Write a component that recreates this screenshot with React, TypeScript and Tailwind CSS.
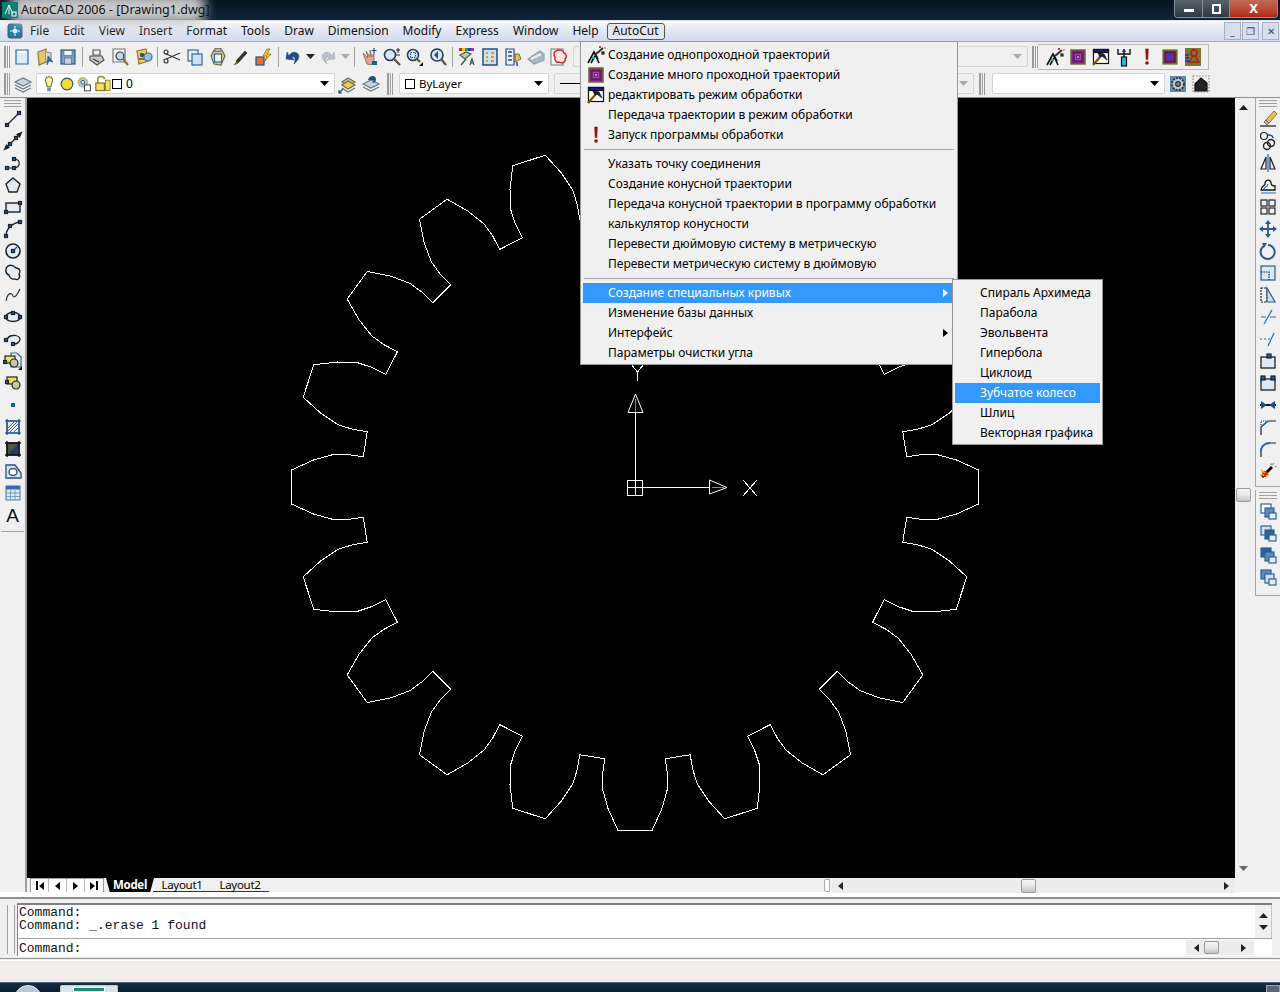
import React from "react";

const UI = "font-['Noto_Sans','Open_Sans',sans-serif]";

/* ---------- gear geometry ---------- */
const CX = 635, CY = 488;
const half: [number, number][] = [[343.7, 2.85], [322.6, 4.8], [303.4, 6.15], [288.5, 6.45], [273.4, 6.35]];
function gearPoints() {
  const pts: string[] = [];
  for (let i = 0; i < 20; i++) {
    const c = 180 - i * 18;
    const add = (r: number, a: number) => {
      const t = (a * Math.PI) / 180;
      pts.push(`${(CX + r * Math.cos(t)).toFixed(1)},${(CY + r * Math.sin(t)).toFixed(1)}`);
    };
    for (let k = half.length - 1; k >= 0; k--) add(half[k][0], c + half[k][1]);
    for (let k = 0; k < half.length; k++) add(half[k][0], c - half[k][1]);
  }
  return pts.join(" ");
}

/* ---------- icon primitives ---------- */
const Dot = ({ x, y, s = 3 }: { x: number; y: number; s?: number }) => (
  <rect x={x - s / 2} y={y - s / 2} width={s} height={s} fill="#0b5fb8" />
);
const Ic = ({ children, s = 20 }: { children: React.ReactNode; s?: number }) => (
  <svg width={s} height={s} viewBox="0 0 20 20" fill="none" stroke="#222" strokeWidth={1.2}>{children}</svg>
);

const Wand = () => (
  <Ic>
    <path d="M2 18 L8 7 L12 14 M5 18 L9 11 M13 18 L8 7" stroke="#111" strokeWidth={1.6} />
    <path d="M10 9 L17 3" stroke="#333" strokeWidth={2} />
    <path d="M6 13 L9 13" stroke="#18a5c9" strokeWidth={2} />
    <Dot x={17} y={8} s={2} /><rect x="13" y="1" width="2" height="2" fill="#c33" stroke="none" /><rect x="18" y="2" width="2" height="2" fill="#d9a" stroke="none" />
  </Ic>
);
const Purple = () => (
  <Ic>
    <rect x="3" y="3" width="14" height="14" fill="#80207f" stroke="#6b6b30" strokeWidth={1.5} />
    <rect x="6" y="6" width="8" height="8" fill="#a04aa0" stroke="#5a1060" />
    <rect x="8.5" y="8.5" width="3" height="3" fill="#e070c0" stroke="#5a1060" strokeWidth={0.7} />
  </Ic>
);
const Hammer = () => (
  <Ic>
    <rect x="2.5" y="2.5" width="15" height="14" fill="#fff" stroke="#111" />
    <rect x="2.5" y="2.5" width="15" height="3" fill="#141c8c" stroke="#111" />
    <path d="M2 18 L10 9" stroke="#7a5200" strokeWidth={2.2} />
    <path d="M7 6 L13 7 L16 13 L11 9 L9 10 Z" fill="#222" stroke="#111" strokeWidth={0.8} />
  </Ic>
);
const Excl = () => (
  <Ic>
    <path d="M8.7 2 H11.3 L10.8 12.5 H9.2 Z" fill="#a00d12" stroke="#8c0a0e" strokeWidth={0.6} />
    <circle cx="10" cy="16" r="1.8" fill="#a00d12" stroke="none" />
  </Ic>
);
const Fork = () => (
  <Ic>
    <path d="M4 2 V7 H16 V2 M10 2 V10" stroke="#111" strokeWidth={1.4} />
    <rect x="7.5" y="10" width="5" height="9" fill="#22c1d6" stroke="#111" />
    <path d="M8.5 5 L10 3 L11.5 5" stroke="#1b2fa0" strokeWidth={1.5} />
  </Ic>
);
const PurpleBlue = () => (
  <Ic>
    <rect x="3" y="3" width="14" height="14" fill="#7a6a30" stroke="#6b6b30" />
    <rect x="5" y="5" width="10" height="10" fill="#80207f" stroke="#4a1050" />
    <path d="M8 7 V13 M8 10 H13" stroke="#2a40d0" strokeWidth={1.5} />
  </Ic>
);
const Olive = () => (
  <Ic>
    <rect x="2" y="1" width="16" height="18" fill="#7c7430" stroke="none" />
    <circle cx="11" cy="6" r="3" stroke="#c01414" strokeWidth={1.4} />
    <path d="M10 9 L6 15 H16 L12 9" stroke="#c01414" strokeWidth={1.3} />
    <path d="M2 8 H6 M2 11 H6 M2 14 H6" stroke="#1b2fc0" strokeWidth={1.4} />
  </Ic>
);

const Doc = () => (<Ic><path d="M4 3 H16 V17 H4 Z" fill="#dcebf7" stroke="#2a6a9a" /><path d="M6 5 H14" stroke="#fff" strokeWidth={2} /></Ic>);
const OpenF = () => (<Ic><path d="M3 5 L11 2 V15 L4 18 Z" fill="#e8c66a" stroke="#8a7a4a" /><path d="M11 5 L16 6 V12 L11 15" fill="#d8d8c8" stroke="#888" /><path d="M13 9 L18 15 L14 14 L12 18 Z" fill="#2a6aa8" stroke="#1a4a80" strokeWidth={0.6} /></Ic>);
const Save = () => (<Ic><rect x="3" y="3" width="14" height="14" fill="#7aa0c8" stroke="#2a5a8a" /><rect x="6" y="3.5" width="8" height="5" fill="#f4f4f4" stroke="#557" strokeWidth={0.6} /><rect x="6.5" y="11" width="7" height="6" fill="#c8d4e4" stroke="#557" strokeWidth={0.6} /></Ic>);
const Printer = () => (<Ic><path d="M6 3 H13 V8 H6 Z" fill="#f0f0f0" stroke="#555" /><path d="M3 9 H15 L17 13 L10 18 L3 13 Z" fill="#c8c8d0" stroke="#555" /><path d="M6 12 L12 15" stroke="#333" /></Ic>);
const Preview = () => (<Ic><path d="M3 2 H15 V15 H3 Z" fill="#f4f4f4" stroke="#777" /><circle cx="10" cy="9" r="4" fill="#bcd8f0" stroke="#335" /><path d="M13 12 L18 18" stroke="#a06a1a" strokeWidth={2.2} /></Ic>);
const Publish = () => (<Ic><path d="M4 4 L13 2 L15 14 L6 17 Z" fill="#f4d060" stroke="#8a7a20" /><circle cx="9" cy="8" r="2.2" fill="#2a4a8a" stroke="none" /><circle cx="15" cy="10" r="4" fill="#9ac0e0" stroke="#4a6a90" /><path d="M6 12 H11" stroke="#555" strokeWidth={1.5} /></Ic>);
const Cut = () => (<Ic><path d="M2 6 L18 13 M2 13 L18 6" stroke="#333" strokeWidth={1.1} /><circle cx="4" cy="5" r="2" fill="#eee" stroke="#333" /><circle cx="4" cy="14" r="2" fill="#eee" stroke="#333" /></Ic>);
const Copy = () => (<Ic><rect x="3" y="3" width="10" height="11" fill="#e8f0f8" stroke="#2a6a9a" /><rect x="7" y="7" width="10" height="11" fill="#cfe0f0" stroke="#2a6a9a" /></Ic>);
const Paste = () => (<Ic><path d="M6 3 L14 3 L17 9 L13 18 L6 17 L3 9 Z" fill="#e4c878" stroke="#6a6a50" /><rect x="6.5" y="7" width="7" height="8" fill="#eef4fa" stroke="#2a6a9a" /><rect x="7" y="1.5" width="6" height="3" fill="#bbb" stroke="#555" strokeWidth={0.7} /></Ic>);
const Brush = () => (<Ic><path d="M5 14 L14 4 L16 6 L7 16 Z" fill="#333" stroke="#111" strokeWidth={0.6} /><path d="M3 18 L6 14 L7 16 Z" fill="#a06a1a" stroke="#5a3a10" strokeWidth={0.6} /></Ic>);
const Bolt = () => (<Ic><rect x="2" y="10" width="8" height="8" fill="#e87030" stroke="#2a4a8a" /><path d="M13 2 L9 9 H13 L10 15 L17 7 H13 L16 2 Z" fill="#f4d020" stroke="#8a6a10" strokeWidth={0.8} /></Ic>);
const Undo = () => (<Ic><path d="M6 9 C8 4 15 4 16 9 C16 12 14 14 11 17 C13 12 12 9 9 10 L11 13 L3 12 L4 5 Z" fill="#1f4f8a" stroke="#153a68" strokeWidth={0.5} /></Ic>);
const Redo = () => (<Ic><path d="M14 9 C12 4 5 4 4 9 C4 12 6 14 9 17 C7 12 8 9 11 10 L9 13 L17 12 L16 5 Z" fill="#b8bec4" stroke="#a0a6ac" strokeWidth={0.5} /></Ic>);
const Pan = () => (<Ic><path d="M4 6 L9 11 L7 4 L11 10 L11 3 L13 10 L15 6 L15 14 L12 18 L8 17 Z" fill="#d8a890" stroke="#8a5a50" strokeWidth={0.8} /><path d="M15 1 V6 M12.5 3.5 H17.5" stroke="#1a4a8a" strokeWidth={1.2} /><rect x="13" y="14" width="5" height="4" fill="#1f5a9a" stroke="none" /></Ic>);
const Zoom1 = () => (<Ic><circle cx="8" cy="8" r="5.5" fill="#d8e8f4" stroke="#2a3a5a" strokeWidth={1.6} /><path d="M12 12 L18 18" stroke="#6a5a3a" strokeWidth={2.4} /><path d="M16 1 V6 M14 3 H18 M14 8 H18" stroke="#222" strokeWidth={1} /></Ic>);
const Zoom2 = () => (<Ic><circle cx="8" cy="8" r="5.5" fill="#d8e8f4" stroke="#2a3a5a" strokeWidth={1.6} /><rect x="5.5" y="5.5" width="5" height="5" stroke="#1f4f8a" strokeDasharray="1.5 1" /><path d="M12 12 L15 15" stroke="#6a5a3a" strokeWidth={2.4} /><path d="M18 15 V19 H14 Z" fill="#111" stroke="none" /></Ic>);
const Zoom3 = () => (<Ic><circle cx="9" cy="8" r="6" fill="#d8e8f4" stroke="#2a3a5a" strokeWidth={1.6} /><path d="M6 8 L10 4 V12 Z" fill="#1f4f8a" stroke="none" /><path d="M13 12 L18 18" stroke="#6a5a3a" strokeWidth={2.4} /></Ic>);
const Props = () => (<Ic><rect x="2" y="1" width="3" height="3" fill="#e02020" stroke="none" /><rect x="5" y="1" width="3" height="3" fill="#e0c020" stroke="none" /><rect x="8" y="1" width="3" height="3" fill="#20a040" stroke="none" /><rect x="11" y="1" width="3" height="3" fill="#2040d0" stroke="none" /><rect x="14" y="1" width="3" height="3" fill="#c020c0" stroke="none" /><path d="M3 8 L9 5 L14 7 L8 12 Z" fill="#bcd0a0" stroke="#555" /><path d="M9 12 L4 18 M13 18 L15 12 L17 18 M14 16 H16" stroke="#444" /></Ic>);
const DC = () => (<Ic><rect x="3" y="2" width="14" height="16" fill="#cfe0f0" stroke="#1f4f8a" strokeWidth={1.5} /><path d="M6 6 H8 M11 6 H14 M6 10 H8 M11 10 H14 M6 14 H8 M11 14 H14" stroke="#d8a020" strokeWidth={2} /></Ic>);
const Pal = () => (<Ic><path d="M3 2 H11 V18 H3 Z" fill="#eef" stroke="#2a4a7a" /><path d="M5 5 H9 M5 9 H9 M5 13 H9" stroke="#2a4a7a" strokeWidth={1.4} /><path d="M12 7 H16 L18 12 L12 15 Z" fill="#e8c040" stroke="#555" strokeWidth={0.8} /><path d="M14 15 V19" stroke="#1f4f8a" strokeWidth={1.5} /></Ic>);
const Sheet = () => (<Ic><path d="M2 12 L14 4 L18 7 L18 13 L8 17 Z" fill="#a8b8c4" stroke="#90a0a8" /><path d="M5 12 L15 7" stroke="#e8f0f4" strokeWidth={2} /></Ic>);
const Markup = () => (<Ic><rect x="2" y="2" width="12" height="16" fill="#fff" stroke="#888" /><path d="M7 4 C10 2 14 3 15 6 C18 7 18 10 16 12 C17 15 13 17 10 15 C7 16 5 13 6 10 C4 8 5 5 7 4 Z" fill="#fbe4e4" stroke="#d02020" strokeWidth={1.4} /></Ic>);

const Layers = () => (<Ic><path d="M2 8 L10 4 L18 8 L10 12 Z" fill="#c8d4dc" stroke="#6a7a88" /><path d="M2 11 L10 15 L18 11 M2 14 L10 18 L18 14" stroke="#6a7a88" /></Ic>);
const Bulb = () => (<Ic><path d="M10 2 C14 2 15 6 13 9 L12 13 H8 L7 9 C5 6 6 2 10 2 Z" fill="#fbf6a0" stroke="#6a6a40" /><rect x="8" y="14" width="4" height="4" fill="#7a8a9a" stroke="none" /></Ic>);
const Sun = () => (<Ic><circle cx="10" cy="10" r="6.5" fill="#f4dc30" stroke="#2a4a8a" /></Ic>);
const Gear2 = () => (<Ic><circle cx="8" cy="8" r="5.5" fill="#a8c8e8" stroke="#c8a030" strokeDasharray="2 1" strokeWidth={1.6} /><circle cx="8" cy="8" r="2" fill="#dff" stroke="#557" /><rect x="10" y="11" width="7" height="7" fill="#fff" stroke="#445" /></Ic>);
const Lock = () => (<Ic><path d="M5 9 V5 C5 1 12 1 12 5" stroke="#a08a20" strokeWidth={1.6} /><rect x="3" y="9" width="9" height="8" fill="#f4e060" stroke="#807020" /><rect x="13" y="6" width="5" height="11" fill="#f4e060" stroke="#807020" strokeWidth={0.8} /></Ic>);
const LayerSw = () => (<Ic><path d="M4 8 L10 4 L17 8 L10 12 Z" fill="#d8c8a0" stroke="#6a6a50" /><path d="M4 11 L10 15 L17 11 L10 7 Z" fill="#f0d040" stroke="#6a6a50" /><path d="M4 14 L10 18 L17 14" stroke="#6a7a88" /><path d="M1 19 L5 15 M1 16 V19 H4" stroke="#1f4f8a" /></Ic>);
const LayerPrev = () => (<Ic><path d="M2 10 L10 6 L18 10 L10 14 Z" fill="#c8d4dc" stroke="#6a7a88" /><path d="M2 13 L10 17 L18 13" stroke="#6a7a88" /><path d="M7 6 C8 1 15 1 15 5 C15 8 13 9 11 9 L13 6 L9 6 Z" fill="#1f4f8a" stroke="none" /></Ic>);
const Cog = () => (<Ic><rect x="2" y="2" width="16" height="16" fill="#5a8ab8" stroke="none" /><circle cx="10" cy="10" r="6" fill="#c8c8c8" stroke="#333" strokeDasharray="2 1.2" strokeWidth={1.8} /><circle cx="10" cy="10" r="2.4" fill="#5a8ab8" stroke="#333" /></Ic>);
const House = () => (<Ic><rect x="2" y="2" width="16" height="16" stroke="#888" strokeDasharray="1.5 1.5" /><path d="M4 10 L10 4 L16 9 V17 H4 Z" fill="#222" stroke="#111" /></Ic>);

/* draw toolbar */
const L1 = () => (<Ic><path d="M4 16 L16 4" /><Dot x={4} y={16} /><Dot x={16} y={4} /></Ic>);
const L2 = () => (<Ic><path d="M3 17 L17 3" strokeWidth={1.3} /><path d="M1.5 18.5 L6 16.5 L3.5 14 Z M18.5 1.5 L14 3.5 L16.5 6 Z" fill="#111" /><Dot x={7} y={13} /><Dot x={13} y={7} /></Ic>);
const L3 = () => (<Ic><path d="M4 15 H11 M11 15 C18 14 18 6 11 6" /><Dot x={4} y={15} /><Dot x={11} y={15} /><Dot x={11} y={6} /></Ic>);
const L4 = () => (<Ic><path d="M10 3 L17 9 L14 17 H6 L3 9 Z" fill="#e0e8f0" stroke="#222" strokeWidth={1.4} /></Ic>);
const L5 = () => (<Ic><rect x="3" y="6" width="14" height="9" fill="#e4ecf4" strokeWidth={1.4} /><Dot x={3} y={15} /><Dot x={17} y={6} /></Ic>);
const L6 = () => (<Ic><path d="M3 17 C3 10 9 4 17 3" strokeWidth={1.4} /><Dot x={3} y={17} /><Dot x={7} y={7} /><Dot x={17} y={3} /></Ic>);
const L7 = () => (<Ic><circle cx="10" cy="10" r="7" fill="#e4ecf4" strokeWidth={1.6} /><path d="M10 10 L14 6" stroke="#0b5fb8" /><Dot x={10} y={10} /></Ic>);
const L8 = () => (<Ic><path d="M5 3 C9 1 12 4 13 5 C17 5 18 9 16 11 C18 14 15 18 12 16 C8 17 6 13 6 12 C2 11 2 5 5 3 Z" fill="#e4ecf4" strokeWidth={1.4} /></Ic>);
const L9 = () => (<Ic><path d="M3 16 C5 6 9 8 10 11 C12 14 15 8 17 4" strokeWidth={1.2} stroke="#333" /></Ic>);
const L10 = () => (<Ic><ellipse cx="10" cy="10" rx="7.5" ry="4.5" fill="#e4ecf4" strokeWidth={1.4} /><Dot x={10} y={6} /><Dot x={3} y={10} /><Dot x={17} y={10} /></Ic>);
const L11 = () => (<Ic><path d="M4 12 C4 5 16 5 17 10 C17 13 14 15 11 15" fill="#e4ecf4" strokeWidth={1.3} /><Dot x={3} y={11} /><Dot x={10} y={15} /></Ic>);
const L12 = () => (<Ic><path d="M8 2 H14 L18 6 V16 H8 Z" fill="#e4ecf4" stroke="#2a6a9a" /><rect x="2" y="5" width="10" height="7" fill="#f0e070" stroke="#222" /><circle cx="11" cy="12" r="4" fill="#c8c8a0" stroke="#222" /><Dot x={2} y={11} /><path d="M19 15 V19 H15 Z" fill="#111" stroke="none" /></Ic>);
const L13 = () => (<Ic><rect x="4" y="4" width="10" height="7" fill="#f0e070" stroke="#222" /><circle cx="13" cy="12" r="4" fill="#c8c8a0" stroke="#222" /><Dot x={4} y={9} /></Ic>);
const L14 = () => (<Ic><rect x="8" y="8" width="4" height="4" fill="#0b5fb8" stroke="none" /></Ic>);
const L15 = () => (<Ic><rect x="4" y="4" width="12" height="12" fill="#e8eef4" stroke="#1f4f8a" /><path d="M2 4 H18 M2 16 H18 M4 2 V18 M16 2 V18" stroke="#1f4f8a" /><path d="M5 14 L14 5 M7 15 L15 7 M5 11 L11 5 M11 15 L15 11" stroke="#333" strokeWidth={0.8} /></Ic>);
const L16 = () => (<Ic><rect x="4" y="4" width="12" height="12" fill="#555540" stroke="#111" /><path d="M4 16 L16 4 V16 Z" fill="#2a3a6a" stroke="none" /><path d="M2 4 H18 M2 16 H18 M4 2 V18 M16 2 V18" stroke="#111" strokeWidth={1.4} /></Ic>);
const L17 = () => (<Ic><path d="M3 4 H12 L18 12 V17 H3 Z" fill="#d8e8f4" stroke="#1f4f8a" strokeWidth={1.3} /><ellipse cx="10" cy="11" rx="4" ry="3.5" fill="#fff" stroke="#555" strokeWidth={1.5} /></Ic>);
const L18 = () => (<Ic><rect x="3" y="3" width="14" height="14" fill="#dce8f4" stroke="#6a8ab0" /><rect x="3" y="3" width="14" height="3.5" fill="#3a6ab0" stroke="none" /><path d="M3 10 H17 M3 13.5 H17 M7.5 7 V17 M12 7 V17" stroke="#6a8ab0" strokeWidth={0.8} /></Ic>);

/* modify toolbar */
const M1 = () => (<Ic><path d="M8 11 L16 2 L19 5 L11 14 Z" fill="#f0c040" stroke="#555" strokeWidth={0.8} /><path d="M6 13 L8 11 L11 14 L9 16 Z" fill="#e8a0a0" stroke="#555" strokeWidth={0.8} /><path d="M2 17 H18" stroke="#111" /></Ic>);
const M2 = () => (<Ic><circle cx="6" cy="5" r="3.5" /><circle cx="13" cy="12" r="3.5" strokeWidth={1.4} /><circle cx="9" cy="15" r="3.5" strokeWidth={1.4} /><path d="M10 4 C13 4 15 5 15 7" stroke="#1f4f8a" strokeWidth={1.5} /></Ic>);
const M3 = () => (<Ic><path d="M8 4 L3 16 H8 Z" /><path d="M12 4 L17 16 H12 Z" fill="#d8e8f4" /><path d="M10 1 V19" stroke="#1f6ac0" /></Ic>);
const M4 = () => (<Ic><path d="M3 15 C3 11 7 11 7 9 C7 4 13 4 13 8 C13 11 16 11 17 11 V15 Z" fill="#fff" stroke="#111" strokeWidth={1.3} /><path d="M3 18 H18 M6 14 C6 12 10 12 10 9" stroke="#1f6ac0" /></Ic>);
const M5 = () => (<Ic><rect x="3" y="3" width="6" height="6" strokeWidth={1.2} /><rect x="11" y="3" width="6" height="6" /><rect x="3" y="11" width="6" height="6" /><rect x="11" y="11" width="6" height="6" /></Ic>);
const M6 = () => (<Ic><path d="M10 2 V18 M2 10 H18" stroke="#2a5a8a" strokeWidth={1.8} /><path d="M10 1 L7 5 H13 Z M10 19 L7 15 H13 Z M1 10 L5 7 V13 Z M19 10 L15 7 V13 Z" fill="#2a5a8a" stroke="none" /></Ic>);
const M7 = () => (<Ic><path d="M6 5 A7 7 0 1 0 10 4" stroke="#2a5a8a" strokeWidth={2} /><path d="M4 2 L9 2 L6 7 Z" fill="#2a5a8a" stroke="none" /></Ic>);
const M8 = () => (<Ic><rect x="3" y="3" width="14" height="14" fill="#d8e8f4" stroke="#2a5a8a" /><path d="M3 9 H11 V17" stroke="#222" strokeDasharray="1.5 1" /></Ic>);
const M9 = () => (<Ic><rect x="3" y="3" width="6" height="14" stroke="#222" strokeDasharray="2 1" /><path d="M9 3 L17 17 H9 Z" fill="#cfe0f0" stroke="#2a5a8a" /></Ic>);
const M10 = () => (<Ic><path d="M3 10 H8 M12 10 H18" stroke="#1f6ac0" /><path d="M6 17 L14 3" stroke="#1f6ac0" /></Ic>);
const M11 = () => (<Ic><path d="M2 10 H4 M6 10 H8 M10 10 H12" stroke="#1f6ac0" /><path d="M10 17 L16 4" stroke="#1f6ac0" /></Ic>);
const M12 = () => (<Ic><rect x="3" y="6" width="14" height="11" fill="#dce8f4" stroke="#111" /><Dot x={11} y={5} s={4} /></Ic>);
const M13 = () => (<Ic><rect x="3" y="6" width="14" height="11" fill="#dce8f4" stroke="#111" /><Dot x={5} y={5} s={4} /><Dot x={15} y={5} s={4} /></Ic>);
const M14 = () => (<Ic><path d="M2 10 H18" strokeWidth={2} stroke="#111" /><path d="M3 6 L9 10 L3 14 Z M17 6 L11 10 L17 14 Z" fill="#1f4f8a" stroke="none" /></Ic>);
const M15 = () => (<Ic><path d="M3 18 V10 L10 4 H18" /><path d="M3 10 L10 4" stroke="#1f6ac0" strokeWidth={1.6} /><path d="M3 8 V4 H8" stroke="#333" strokeDasharray="1 1" /></Ic>);
const M16 = () => (<Ic><path d="M3 18 V12 C3 7 7 4 12 4 H18" /><path d="M3 12 C3 7 7 4 12 4" stroke="#1f6ac0" strokeWidth={1.8} /></Ic>);
const M17 = () => (<Ic><path d="M4 16 L14 6" stroke="#111" strokeWidth={3} /><circle cx="7" cy="13" r="3" fill="#e02020" stroke="none" /><path d="M3 9 L7 12 M2 14 L6 14 M11 14 L8 15" stroke="#e8b020" strokeWidth={1.5} /><path d="M14 4 L16 2 M17 6 L19 5 M13 2 L13 4" stroke="#999" /></Ic>);
const Ord = ({ a, b }: { a: number; b: number }) => {
  const fills = ["#fff", "#5d8bbd", "#2f6199", "#cfe0f0"];
  return (
    <Ic>
      <rect x="3" y="3" width="10" height="9" fill={fills[a]} stroke="#2f6199" />
      <rect x="7" y="7" width="9" height="9" fill={fills[b]} stroke="#2f6199" />
      <rect x="11" y="12" width="7" height="6" fill="#e4eef6" stroke="#2f6199" />
    </Ic>
  );
};

/* ---------- chrome pieces ---------- */
const Btn = ({ children }: { children: React.ReactNode }) => (
  <div className="w-[23px] h-[22px] flex items-center justify-center shrink-0">{children}</div>
);
const VSep = () => <div className="w-[6px] h-[20px] flex justify-center shrink-0"><div className="w-px h-full bg-[#a0a0a0]" /></div>;
const Grip = () => (
  <div className="flex gap-px shrink-0 h-full py-[2px]">
    <div className="w-[2px] bg-[#f8f8f8] border-x border-[#9a9a9a]" />
    <div className="w-[3px] bg-[#f8f8f8] border-x border-[#9a9a9a]" />
  </div>
);
const HGrip = () => (
  <div className="h-[7px] mx-[3px] border-y border-[#a0a0a0] flex items-center shrink-0">
    <div className="h-px w-full bg-[#a0a0a0]" />
  </div>
);
const Caret = ({ c = "#000" }: { c?: string }) => (
  <svg width="9" height="5" viewBox="0 0 9 5"><path d="M0 0 H9 L4.5 5 Z" fill={c} /></svg>
);
const Tri = ({ dir, c = "#222" }: { dir: "l" | "r" | "u" | "d"; c?: string }) => {
  const d = { l: "M5 0 V8 L0 4 Z", r: "M0 0 V8 L5 4 Z", u: "M0 5 H9 L4.5 0 Z", d: "M0 0 H9 L4.5 5 Z" }[dir];
  const hz = dir === "l" || dir === "r";
  return <svg width={hz ? 5 : 9} height={hz ? 8 : 5} viewBox={hz ? "0 0 5 8" : "0 0 9 5"}><path d={d} fill={c} /></svg>;
};
const Thumb = ({ cls }: { cls: string }) => (
  <div className={`${cls} rounded-[2px] border border-[#9a9a9a] bg-gradient-to-b from-[#f4f4f4] via-[#e8e8e8] to-[#c4c4c4] shrink-0`} />
);
const Combo = ({ cls, children, off }: { cls: string; children?: React.ReactNode; off?: boolean }) => (
  <div className={`${cls} h-[21px] rounded-[2px] border border-[#d4d4d4] ${off ? "bg-[#f0f0f0]" : "bg-white"} flex items-center justify-between pr-[5px] pl-[3px]`}>
    <div className="flex items-center min-w-0 overflow-hidden">{children}</div>
    <Caret c={off ? "#aaa" : "#000"} />
  </div>
);
const MenuRow = ({ icon, text, hi, arrow }: { icon?: React.ReactNode; text: string; hi?: boolean; arrow?: boolean }) => (
  <div className={`h-5 flex items-center relative mx-[2px] ${hi ? "bg-[#3399ff] text-white" : "text-black"}`}>
    <div className="w-[25px] flex justify-center shrink-0 ml-0">{icon}</div>
    <span className="whitespace-nowrap">{text}</span>
    {arrow && <div className="absolute right-[7px] top-[6px]"><Tri dir="r" c={hi ? "#fff" : "#000"} /></div>}
  </div>
);
const MenuSep = () => <div className="h-[9px] flex items-center mx-[3px]"><div className="h-px w-full bg-[#a8a8a8]" /></div>;

const menuItems = ["File", "Edit", "View", "Insert", "Format", "Tools", "Draw", "Dimension", "Modify", "Express", "Window", "Help"];
const drawIcons = [L1, L2, L3, L4, L5, L6, L7, L8, L9, L10, L11, L12, L13, L14, L15, L16, L17, L18];
const modIcons = [M1, M2, M3, M4, M5, M6, M7, M8, M9, M10, M11, M12, M13, M14, M15, M16, M17];

export default function App() {
  return (
    <div className={`relative w-[1280px] h-[992px] overflow-hidden bg-[#f0f0f0] flex flex-col text-[12px] ${UI}`}>
      {/* title bar */}
      <div className="relative h-[21px] shrink-0 bg-gradient-to-b from-[#071422] to-[#102338] border-b border-[#dfe3e8] flex items-start">
        <div className="absolute left-[10px] top-[-6px] w-[195px] h-[30px] bg-[#c8c8c8] blur-[6px] rounded-[10px]" />
        <div className="relative flex items-center h-5 pl-[2px] gap-[3px]">
          <svg width="16" height="16" viewBox="0 0 16 16" className="mb-[1px]">
            <rect width="16" height="16" fill="#0d7d78" />
            <path d="M3 12 L7 3 L11 12 M7 3 V12" stroke="#e6f4f4" fill="none" />
            <rect x="10" y="10" width="4" height="4" fill="none" stroke="#fff" />
          </svg>
          <span className="text-[12.5px] text-[#111] whitespace-nowrap leading-5">AutoCAD 2006 - [Drawing1.dwg]</span>
        </div>
        <div className="absolute right-[2px] top-0 flex h-[18px] rounded-b-[4px] border border-t-0 border-[#8a9098] overflow-hidden">
          <div className="w-[28px] bg-gradient-to-b from-[#58626e] to-[#2e3944] border-r border-[#8a9098] flex items-center justify-center"><div className="w-[10px] h-[3px] bg-white mt-[4px]" /></div>
          <div className="w-[27px] bg-gradient-to-b from-[#58626e] to-[#2e3944] border-r border-[#8a9098] flex items-center justify-center"><div className="w-[9px] h-[10px] border-2 border-white" /></div>
          <div className="w-[47px] bg-gradient-to-b from-[#c06a58] to-[#b02a14] flex items-center justify-center"><span className="text-white font-bold text-[13px] leading-none">X</span></div>
        </div>
      </div>

      {/* menu bar */}
      <div className="h-[21px] shrink-0 bg-gradient-to-b from-[#f8f9fc] via-[#e2e6f2] to-[#d4dbee] border-b border-[#a8a8a8] flex items-center">
        <div className="w-[24px] pl-[7px] shrink-0">
          <svg width="16" height="16" viewBox="0 0 16 16"><rect x="1" y="1" width="14" height="14" rx="2" fill="#1f77b4" stroke="#555" /><path d="M8 3 V13 M3 8 H13" stroke="#fff" /><rect x="6" y="6" width="4" height="4" fill="#e4f0ff" /></svg>
        </div>
        <div className="flex items-center text-[#111]">
          <div className="flex gap-[14px] pl-[6px]">
            {menuItems.map((m) => <span key={m}>{m}</span>)}
          </div>
          <div className="ml-[8px] px-[5px] h-[17px] flex items-center border border-[#555] rounded-[3px] bg-[#e4e7f0]">AutoCut</div>
        </div>
        <div className="ml-auto flex gap-[1px] pr-[1px] h-[18px]">
          {["_", "❐", "✕"].map((g, i) => (
            <div key={g} className={`w-[17px] border border-[#a8b0c4] bg-[#d8deee] text-[#445] text-[10px] leading-[16px] text-center ${i === 2 ? "ml-[2px]" : ""}`}>{g}</div>
          ))}
        </div>
      </div>

      {/* toolbar row 1 */}
      <div className="h-[28px] shrink-0 flex items-center pl-[4px] pt-[1px]">
        <div className="h-[26px]"><Grip /></div>
        <div className="flex items-center pl-[0.5px]">
          <Btn><Doc /></Btn><Btn><OpenF /></Btn><Btn><Save /></Btn><VSep />
          <Btn><Printer /></Btn><Btn><Preview /></Btn><Btn><Publish /></Btn><VSep />
          <Btn><Cut /></Btn><Btn><Copy /></Btn><Btn><Paste /></Btn><Btn><Brush /></Btn><Btn><Bolt /></Btn><VSep />
          <Btn><Undo /></Btn><div className="w-[12px] flex justify-center"><Caret c="#222" /></div>
          <Btn><Redo /></Btn><div className="w-[12px] flex justify-center"><Caret c="#aaa" /></div><VSep />
          <Btn><Pan /></Btn><Btn><Zoom1 /></Btn><Btn><Zoom2 /></Btn><Btn><Zoom3 /></Btn><VSep />
          <Btn><Props /></Btn><Btn><DC /></Btn><Btn><Pal /></Btn><Btn><Sheet /></Btn><Btn><Markup /></Btn>
        </div>
        <Combo cls="flex-1 ml-[2px]" off />
        <div className="ml-[4px] h-[26px]"><Grip /></div>
        <div className="flex items-center pl-[5px] border-y border-r border-[#b8b8b8] h-[26px] pr-[4px]">
          <Btn><Wand /></Btn><Btn><Purple /></Btn><Btn><Hammer /></Btn><Btn><Fork /></Btn><Btn><Excl /></Btn><Btn><PurpleBlue /></Btn><Btn><Olive /></Btn>
        </div>
        <div className="w-[71px] shrink-0" />
      </div>

      {/* toolbar row 2 */}
      <div className="h-[28px] shrink-0 flex items-center pl-[4px] border-b border-[#8c8c8c]">
        <div className="h-[26px]"><Grip /></div>
        <div className="w-[26px] flex justify-center shrink-0"><Ic><path d="M2 8 L10 4 L18 8 L10 12 Z" fill="#c8d4dc" stroke="#6a7a88" /><path d="M2 11 L10 15 L18 11 M2 14 L10 18 L18 14" stroke="#6a7a88" /></Ic></div>
        <Combo cls="w-[299px] shrink-0">
          <div className="w-[18px] flex justify-center"><Bulb /></div>
          <div className="w-[18px] flex justify-center"><Sun /></div>
          <div className="w-[17px] flex justify-center"><Gear2 /></div>
          <div className="w-[19px] flex justify-center"><Lock /></div>
          <div className="w-[10px] h-[10px] border border-black bg-white ml-[0px] shrink-0" />
          <span className="ml-[4px]">0</span>
        </Combo>
        <div className="pl-[1px] flex"><Btn><LayerSw /></Btn><Btn><LayerPrev /></Btn></div>
        <div className="ml-[5px] h-[26px]"><Grip /></div>
        <Combo cls="w-[150px] ml-[6px] shrink-0">
          <div className="w-[10px] h-[10px] border border-black bg-white ml-[2px] shrink-0" />
          <span className="ml-[4px] text-[11.5px]">ByLayer</span>
        </Combo>
        <Combo cls="flex-1 ml-[5px]" off><div className="w-[30px] h-px bg-black ml-[2px]" /></Combo>
        <div className="ml-[5px] h-[26px]"><Grip /></div>
        <Combo cls="w-[173px] ml-[7px] shrink-0" />
        <div className="flex pl-[1px] pr-[3px] shrink-0"><Btn><Cog /></Btn><Btn><House /></Btn></div>
        <div className="w-[65px] shrink-0" />
      </div>

      {/* work area */}
      <div className="h-[796px] shrink-0 flex">
        {/* left toolbar */}
        <div className="w-[27px] shrink-0 border-r-2 border-[#a0a0a0] flex flex-col">
          <div className="h-[434px] border-b border-[#a8a8a8] mx-[1px] flex flex-col pt-[2px]">
            <HGrip />
            <div className="flex flex-col items-center pt-[1px]">
              {drawIcons.map((I, i) => <div key={i} className="h-[22px] flex items-center justify-center"><I /></div>)}
              <div className="h-[22px] flex items-center justify-center text-[19px] text-[#111] leading-none font-['Liberation_Sans',sans-serif]">A</div>
            </div>
          </div>
        </div>

        {/* centre */}
        <div className="flex-1 min-w-0 flex flex-col">
          <div className="h-[780px] flex shrink-0">
            <div className="flex-1 bg-black relative overflow-hidden">
              <svg className="absolute left-0 top-0" width="1208" height="780" viewBox="27 99 1208 780" shapeRendering="crispEdges" fill="none" stroke="#fff">
                <polygon points={gearPoints()} />
                <path d="M627.5 481.5 H642.5 V496.5 H627.5 Z M635.5 481.5 V496.5 M627.5 488.5 H709 M635.5 481.5 V413" />
                <path d="M635.5 395 L628 413.5 H643 Z M709.5 481 L727 488.5 L709.5 495 Z" shapeRendering="geometricPrecision" strokeWidth={1} />
                <path d="M635.5 400 V413 M712 488.5 H724" stroke="#888" />
                <path d="M743 481 L757 497 M757 481 L743 497 M631 365 L637.5 373 L644 365 M637.5 373 V382" />
              </svg>
            </div>
            <div className="w-[17px] bg-[#f0f0f0] flex flex-col items-center relative shrink-0">
              <div className="pt-[7px]"><Tri dir="u" /></div>
              <Thumb cls="w-[15px] h-[14px] mt-[378px]" />
              <div className="mt-auto pb-[7px]"><Tri dir="d" c="#666" /></div>
            </div>
          </div>
          {/* layout tabs */}
          <div className="h-[16px] flex items-start shrink-0 pl-[3px]">
            <div className="flex h-[15px] border border-[#999] bg-white">
              {(["l", "L", "R", "r"] as const).map((k, i) => (
                <div key={k} className={`w-[18px] flex items-center justify-center gap-px ${i < 3 ? "border-r border-[#bbb]" : ""}`}>
                  {k === "l" && <div className="w-[2px] h-[9px] bg-black" />}
                  <Tri dir={k === "l" || k === "L" ? "l" : "r"} c="#000" />
                  {k === "r" && <div className="w-[2px] h-[9px] bg-black" />}
                </div>
              ))}
            </div>
            <div className="relative ml-[2px] flex text-[11.5px] tracking-[-0.3px] h-[14px] items-center leading-none">
              <div className="px-[8px] h-[14px] flex items-center bg-black text-white font-bold [clip-path:polygon(0_0,100%_0,92%_100%,8%_100%)] w-[48px] justify-center">Model</div>
              <div className="w-[58px] h-[14px] flex items-center justify-center border-b border-[#333] -ml-[1px]">Layout1</div>
              <div className="w-[58px] h-[14px] flex items-center justify-center border-b border-[#333]">Layout2</div>
            </div>
            <div className="ml-auto flex items-center w-[411px] h-[15px] shrink-0">
              <div className="w-[6px] h-[13px] border border-[#aaa] rounded-l-[2px] bg-white shrink-0" />
              <div className="flex-1 flex items-center h-[15px] bg-[#ececec] relative px-[6px] ml-[2px]">
                <Tri dir="l" />
                <div className="flex-1" />
                <Thumb cls="w-[15px] h-[14px] mr-[188px]" />
                <Tri dir="r" />
              </div>
            </div>
            <div className="w-[17px] shrink-0" />
          </div>
        </div>

        {/* right toolbars */}
        <div className="w-[28px] shrink-0 pl-[3px] flex flex-col">
          <div className="h-[389px] flex flex-col border-l border-b border-[#a8a8a8] pt-[2px]">
            <HGrip />
            <div className="flex flex-col items-center pt-[1px]">
              {modIcons.map((I, i) => <div key={i} className="h-[22px] flex items-center justify-center"><I /></div>)}
            </div>
          </div>
          <div className="h-[106px] mt-[3px] flex flex-col border-l border-b border-[#a8a8a8] pt-[2px]">
            <HGrip />
            <div className="flex flex-col items-center pt-[1px]">
              <div className="h-[22px] flex items-center"><Ord a={0} b={1} /></div>
              <div className="h-[22px] flex items-center"><Ord a={3} b={2} /></div>
              <div className="h-[22px] flex items-center"><Ord a={2} b={1} /></div>
              <div className="h-[22px] flex items-center"><Ord a={1} b={3} /></div>
            </div>
          </div>
        </div>
      </div>

      {/* gap line above command window */}
      <div className="h-[7px] shrink-0 bg-white border-b-2 border-[#8e8e8e] -mt-[2px] mb-[4px]" />

      {/* command window */}
      <div className="h-[53px] shrink-0 flex pl-[7px] pr-[8px]">
        <div className="w-[8px] shrink-0 border-x border-[#a0a0a0] bg-[#f4f4f4] my-[2px]" />
        <div className="ml-[2px] flex-1 min-w-0 flex flex-col border-l border-t-2 border-[#808080] bg-white font-['Liberation_Mono',monospace] text-[13px] leading-[13px] text-[#111] whitespace-pre">
          <div className="h-[34px] flex border-b border-[#a0a0a0] shrink-0">
            <div className="flex-1 pl-[1px] pt-[1px]">
              <div>Command:</div>
              <div>Command: _.erase 1 found</div>
            </div>
            <div className="w-[17px] bg-[#f0f0f0] border-r border-[#c8c8c8] flex flex-col items-center justify-between py-[8px]">
              <Tri dir="u" /><Tri dir="d" />
            </div>
          </div>
          <div className="flex-1 flex">
            <div className="flex-1 pl-[1px] pt-[3px]">Command:</div>
            <div className="w-[68px] bg-[#ececec] flex items-center gap-[5px] px-[8px] h-[15px] mt-[1px] mr-[18px]">
              <Tri dir="l" />
              <Thumb cls="w-[15px] h-[13px]" />
              <div className="flex-1" />
              <Tri dir="r" />
            </div>
          </div>
        </div>
      </div>

      {/* status bar */}
      <div className="h-[2px] mt-[1px] shrink-0 border-b border-[#909090]" />
      <div className="h-[22px] shrink-0 mt-[1px] bg-[#f1eded] border-t border-white" />

      {/* taskbar */}
      <div className="flex-1 bg-gradient-to-b from-[#122a42] to-[#0a1e34] border-t border-[#5a6a7a] relative flex items-end">
        <div className="ml-[14px] w-[28px] h-[7px] overflow-hidden shrink-0"><div className="w-[28px] h-[28px] rounded-full bg-[#b4c8d8] border border-[#e4eef4]" /></div>
        <div className="ml-[18px] w-[58px] h-[7px] bg-[#dce4ea] border border-b-0 border-[#c0c8d0] rounded-t-[2px] flex justify-center shrink-0">
          <div className="w-[32px] h-[5px] mt-[1px] bg-[#1c8a78] border border-white" />
        </div>
        <div className="ml-auto w-[14px] h-[7px] bg-[#5a6672] border border-b-0 border-[#9aa4ae]" />
      </div>

      {/* AutoCut menu */}
      <div className="absolute left-[580px] top-[41px] w-[378px] h-[324px] bg-[#f0f0f0] border border-[#979797] pt-[3px] text-[12px]">
        <MenuRow icon={<Wand />} text="Создание однопроходной траекторий" />
        <MenuRow icon={<Purple />} text="Создание много проходной траекторий" />
        <MenuRow icon={<Hammer />} text="редактировать режим обработки" />
        <MenuRow text="Передача траектории в режим обработки" />
        <MenuRow icon={<Excl />} text="Запуск программы обработки" />
        <MenuSep />
        <MenuRow text="Указать точку соединения" />
        <MenuRow text="Создание конусной траектории" />
        <MenuRow text="Передача конусной траектории в программу обработки" />
        <MenuRow text="калькулятор конусности" />
        <MenuRow text="Перевести дюймовую систему в метрическую" />
        <MenuRow text="Перевести метрическую систему в дюймовую" />
        <MenuSep />
        <MenuRow text="Создание специальных кривых" hi arrow />
        <MenuRow text="Изменение базы данных" />
        <MenuRow text="Интерфейс" arrow />
        <MenuRow text="Параметры очистки угла" />
      </div>

      {/* submenu */}
      <div className="absolute left-[952px] top-[279px] w-[151px] h-[166px] bg-[#f0f0f0] border border-[#979797] pt-[3px] text-[12px]">
        {["Спираль Архимеда", "Парабола", "Эвольвента", "Гипербола", "Циклоид", "Зубчатое колесо", "Шлиц", "Векторная графика"].map((t, i) => (
          <MenuRow key={t} text={t} hi={i === 5} />
        ))}
      </div>
    </div>
  );
}
